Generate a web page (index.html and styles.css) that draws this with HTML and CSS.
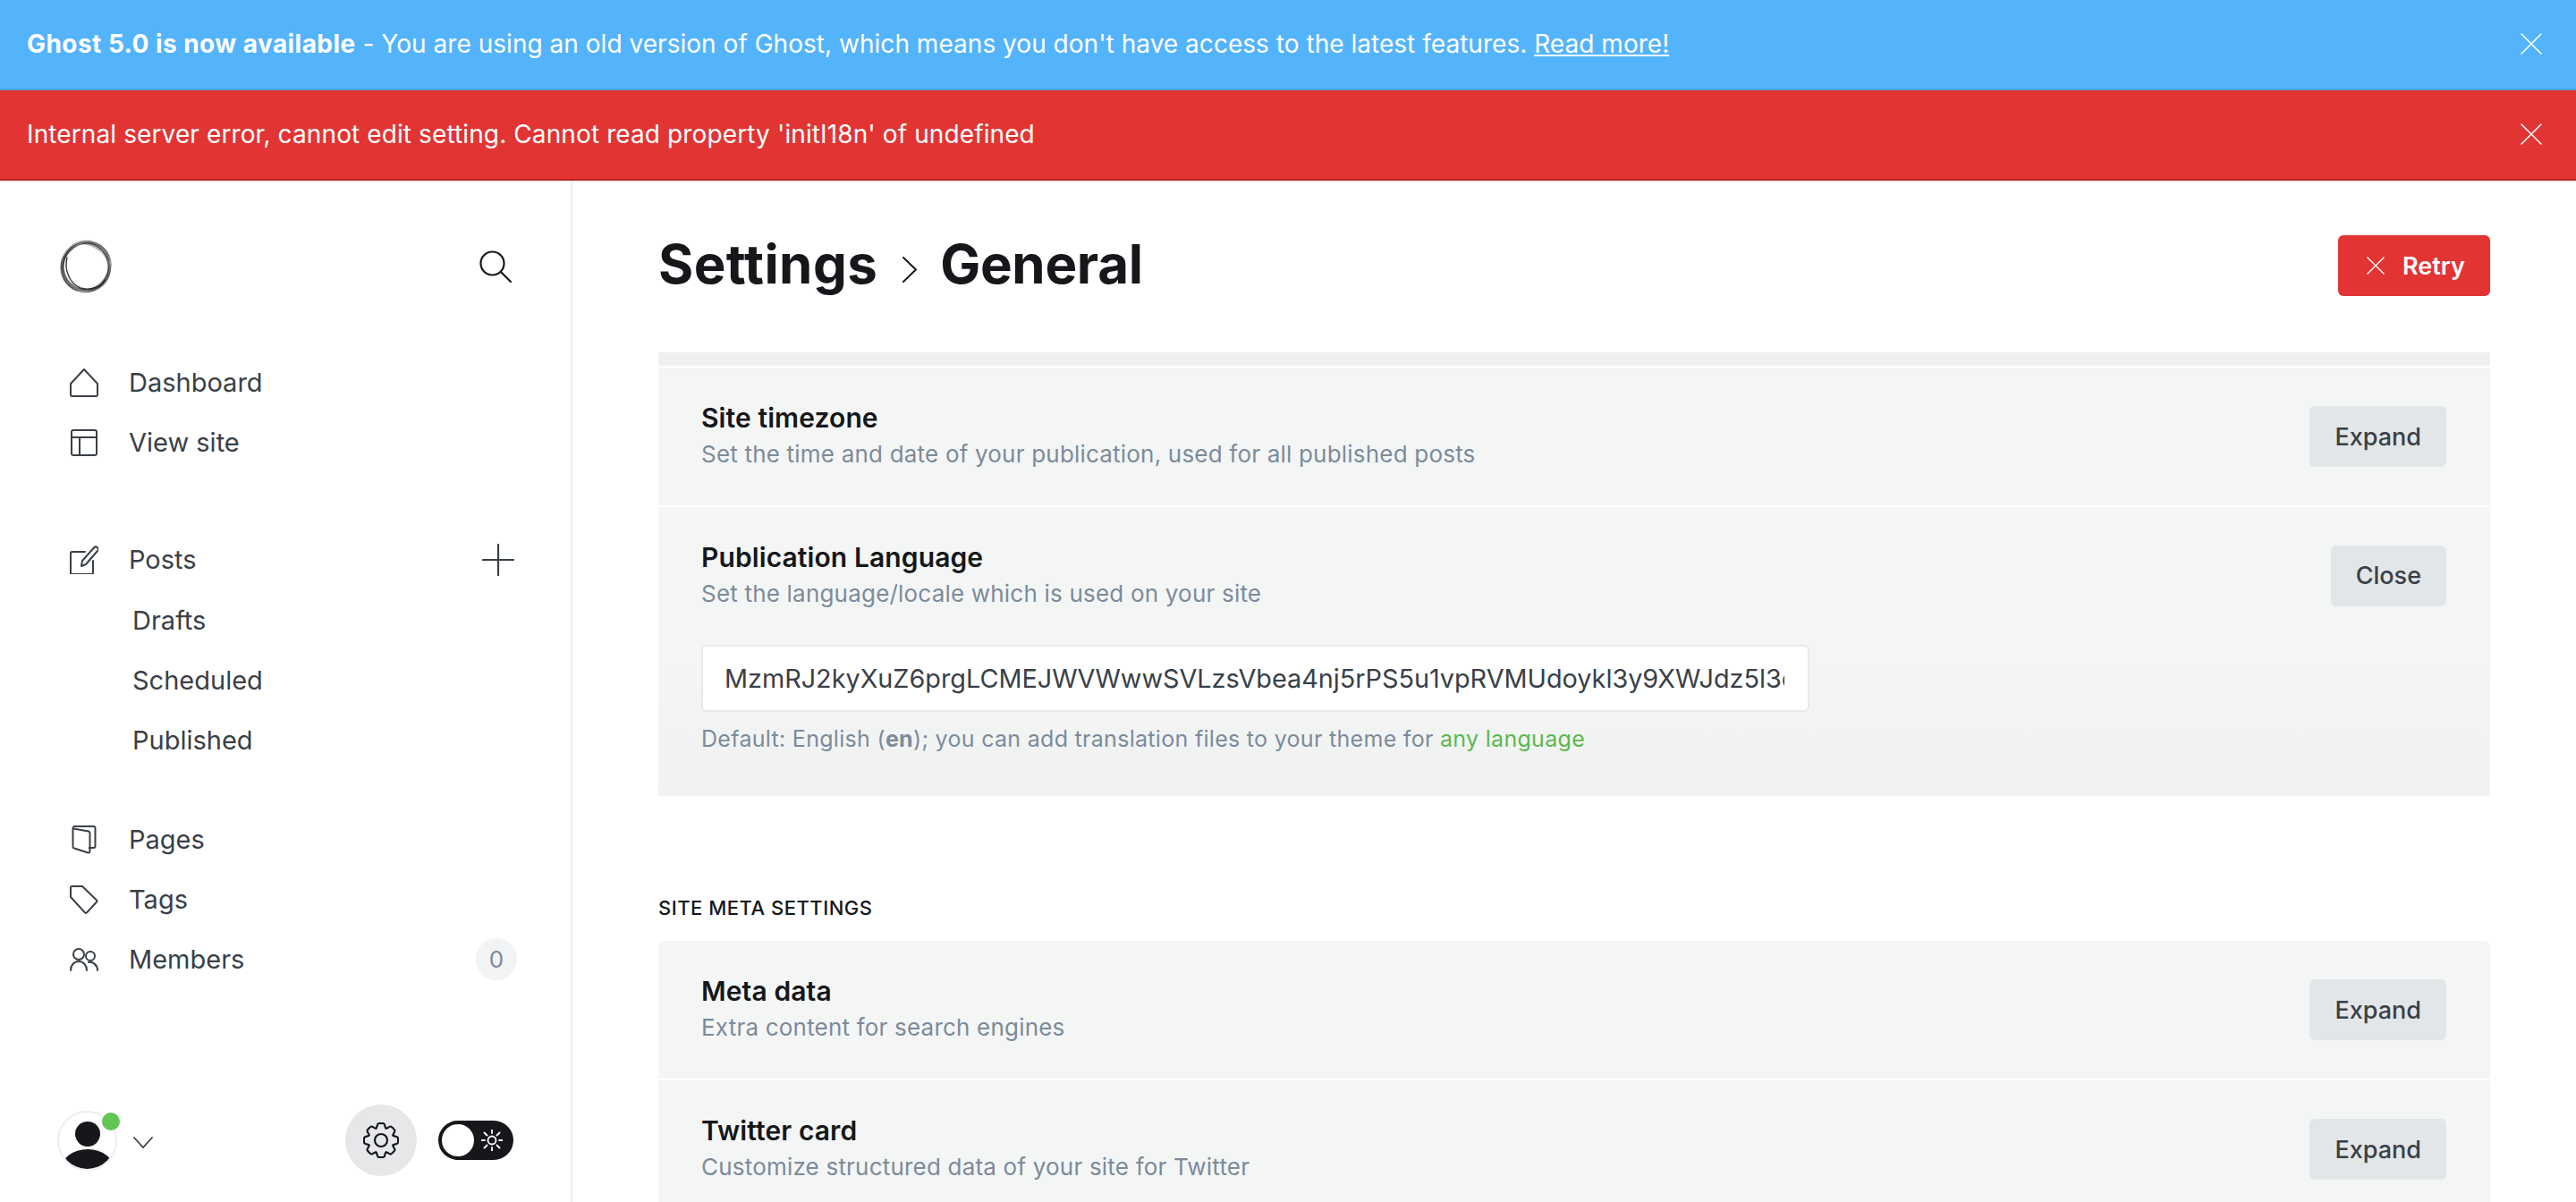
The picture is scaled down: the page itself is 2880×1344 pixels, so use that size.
FILE: index.html
```html
<!DOCTYPE html>
<html lang="en">
<head>
    <meta charset="UTF-8">
    <title>Settings - General</title>
    <link rel="stylesheet" href="styles.css">
</head>
<body>
<div class="alert alert-blue">
    <p><b>Ghost 5.0 is now available</b> - You are using an old version of Ghost, which means you don't have access to the latest features. <a href="#">Read more!</a></p>
    <svg class="alert-close" viewBox="0 0 24 24"><path d="M1 1l22 22M23 1L1 23"/></svg>
</div>
<div class="alert alert-red">
    <p>Internal server error, cannot edit setting. Cannot read property 'initI18n' of undefined</p>
    <svg class="alert-close" viewBox="0 0 24 24"><path d="M1 1l22 22M23 1L1 23"/></svg>
</div>

<div class="app">
    <aside class="sidebar">
        <div class="side-top">
            <svg class="logo" viewBox="0 0 60 60">
                <path d="M25 5C32-1 47 3 55 17c2 5 1 7 0 9C50 14 38 6 25 5z" fill="#bdbdbd" stroke="none"/>
                <path d="M56 26c5 12-3 28-18 32-5 1-8 1-11 0 16 1 30-15 29-32z" fill="#a0a0a0" stroke="none"/>
                <path d="M24 5C10 8 1 20 2 32c1 12 8 22 20 26C10 50 4 40 5 30 6 19 14 9 24 5z" fill="#9a9a9a" stroke="none"/>
                <ellipse cx="30" cy="30" rx="29" ry="24.500" transform="rotate(-45 30 30)"/>
                <ellipse cx="30" cy="30" rx="29" ry="25" transform="rotate(-70 30 30)"/>
                <ellipse cx="30" cy="30" rx="28.500" ry="25" transform="rotate(-100 30 30)"/>
                <ellipse cx="30" cy="30" rx="28.500" ry="25.500" transform="rotate(-20 30 30)"/>
                <ellipse cx="30" cy="30" rx="28" ry="25.500" transform="rotate(30 30 30)"/>
                <ellipse cx="30" cy="30" rx="27" ry="25" transform="rotate(70 30 30)"/>
                <path class="logo-edge" d="M9 20C6 32 10 48 24 54c10 3 22 0 27-9"/>
            </svg>
            <svg class="search-icon" viewBox="0 0 36 36"><circle cx="14.500" cy="14.500" r="13"/><path d="M24 24l11 11"/></svg>
        </div>

        <ul class="nav">
            <li><svg class="nav-icon" viewBox="0 0 32 32"><path d="M1 17L16 1l15 16v12.500a1.500 1.500 0 0 1-1.500 1.500h-27A1.500 1.500 0 0 1 1 29.500z"/></svg>Dashboard</li>
            <li><svg class="nav-icon" viewBox="0 0 32 32"><rect x="2" y="2" width="28" height="28" rx="2"/><path d="M2 10h28M11 10v20"/></svg>View site</li>
        </ul>

        <ul class="nav nav-posts">
            <li><svg class="nav-icon" viewBox="0 0 32 32"><path d="M17 7H2.500A1.500 1.500 0 0 0 1 8.500v22A1.500 1.500 0 0 0 2.500 32h22a1.500 1.500 0 0 0 1.500-1.500V17"/><path d="M13 23l1-6L27 2.500a2.500 2.500 0 0 1 4 3.500L18 21z"/></svg>Posts
                <svg class="plus" viewBox="0 0 36 36"><path d="M18 1v34M1 18h34"/></svg></li>
            <li class="sub">Drafts</li>
            <li class="sub">Scheduled</li>
            <li class="sub">Published</li>
        </ul>

        <ul class="nav">
            <li><svg class="nav-icon" viewBox="0 0 32 32"><path d="M4 3.500l17 3a2 2 0 0 1 1.500 2V29a1.500 1.500 0 0 1-2 1.500L5 25.500a2 2 0 0 1-1.500-2V3a2 2 0 0 1 2-2h21a2 2 0 0 1 2 2v20a2 2 0 0 1-2 2h-5"/></svg>Pages</li>
            <li><svg class="nav-icon" viewBox="0 0 32 32"><path d="M2.500 1H14l16 15.500a1.500 1.500 0 0 1 0 2L19 30.500a1.500 1.500 0 0 1-2 0L1 13V2.500A1.500 1.500 0 0 1 2.500 1z"/></svg>Tags</li>
            <li><svg class="nav-icon" viewBox="0 0 32 32"><circle cx="10" cy="10" r="6"/><path d="M1 28c0-6 4-10 9-10s9 4 9 10"/><circle cx="23" cy="12" r="5"/><path d="M21 19c5-1 10 3 10 9"/></svg>Members<span class="badge">0</span></li>
        </ul>

        <div class="side-foot">
            <div class="avatar">
                <svg viewBox="0 0 63 63"><circle cx="32" cy="24" r="14" fill="#15171a"/><ellipse cx="32" cy="64" rx="30" ry="23" fill="#15171a"/></svg>
                <span class="dot"></span>
            </div>
            <svg class="chevron" viewBox="0 0 22 13"><path d="M1 1l10 11L21 1"/></svg>
            <div class="gear-wrap">
                <svg class="gear" viewBox="0 0 40 40">
                    <defs><path id="tooth" d="M14.450 6.600C15.850 6 15.400 1.600 17.030 1.230Q20 .500 22.970 1.230C24.600 1.600 24.150 6 25.550 6.600"/></defs>
                    <circle cx="20" cy="20" r="7"/>
                    <use href="#tooth"/>
                    <use href="#tooth" transform="rotate(45 20 20)"/>
                    <use href="#tooth" transform="rotate(90 20 20)"/>
                    <use href="#tooth" transform="rotate(135 20 20)"/>
                    <use href="#tooth" transform="rotate(180 20 20)"/>
                    <use href="#tooth" transform="rotate(225 20 20)"/>
                    <use href="#tooth" transform="rotate(270 20 20)"/>
                    <use href="#tooth" transform="rotate(315 20 20)"/>
                </svg>
            </div>
            <div class="toggle">
                <span class="knob"></span>
                <svg class="sun" viewBox="0 0 24 24"><circle cx="12" cy="12" r="4.500"/><path d="M12 0v4M12 20v4M0 12h4M20 12h4M3.500 3.500l3 3M17.500 17.500l3 3M3.500 20.500l3-3M17.500 6.500l3-3"/></svg>
            </div>
        </div>
    </aside>

    <main class="main">
        <header class="head">
            <h1><span class="h1-root">Settings</span><svg class="crumb" viewBox="0 0 16 29"><path d="M1 1l14 13.500L1 28"/></svg>General</h1>
            <button class="retry"><svg viewBox="0 0 20 20"><path d="M.5.500l19 19M19.500.500l-19 19"/></svg>Retry</button>
        </header>

        <div class="strip"></div>
        <section class="row">
            <div>
                <h4>Site timezone</h4>
                <p>Set the time and date of your publication, used for all published posts</p>
            </div>
            <button class="btn">Expand</button>
        </section>
        <section class="row row-open">
            <div class="row-top">
                <div>
                    <h4>Publication Language</h4>
                    <p>Set the language/locale which is used on your site</p>
                </div>
                <button class="btn">Close</button>
            </div>
            <input class="text-input" type="text" value="MzmRJ2kyXuZ6prgLCMEJWVWwwSVLzsVbea4nj5rPS5u1vpRVMUdoykl3y9XWJdz5l3c7a2Qm">
            <p class="help">Default: English (<b>en</b>); you can add translation files to your theme for <a href="#">any language</a></p>
        </section>

        <h3 class="section-title">Site meta settings</h3>
        <section class="row row-first">
            <div>
                <h4>Meta data</h4>
                <p>Extra content for search engines</p>
            </div>
            <button class="btn">Expand</button>
        </section>
        <section class="row">
            <div>
                <h4>Twitter card</h4>
                <p>Customize structured data of your site for Twitter</p>
            </div>
            <button class="btn">Expand</button>
        </section>
    </main>
</div>
</body>
</html>
```

FILE: styles.css
```css
*{
    margin: 0;
    padding: 0;
    box-sizing: border-box;
}
html,body{
    height: 100%;
    overflow: hidden;
}
body{
    display: flex;
    flex-direction: column;
    font-family: Inter, "Liberation Sans", sans-serif;
    color: #15171a;
    background: #ffffff;
}
ul{
    list-style: none;
}
a{
    color: inherit;
}
svg{
    fill: none;
    flex: none;
}

/* alerts */
.alert{
    display: flex;
    align-items: center;
    justify-content: space-between;
    flex: none;
    height: 101px;
    padding: 0 38px 1px 30px;
    color: #ffffff;
    font-size: 28px;
}
.alert b{
    letter-spacing: .45px;
}
.alert-blue{
    background: #54b4fb;
    border-bottom: 2px solid #4a9fdd;
    letter-spacing: .03px;
}
.alert-red{
    background: #e13433;
    border-bottom: 2px solid #b72524;
    letter-spacing: .11px;
}
.alert-close{
    width: 24px;
    height: 24px;
    stroke: #ffffff;
    stroke-width: 1.600;
    stroke-linecap: round;
}

.app{
    display: flex;
    flex: 1;
    min-height: 0;
}

/* sidebar */
.sidebar{
    display: flex;
    flex-direction: column;
    flex: none;
    width: 640px;
    padding: 66px 64px 29px 64px;
    border-right: 2px solid #e9ebec;
}
.side-top{
    display: flex;
    align-items: center;
    justify-content: space-between;
    padding-right: 2px;
    margin-bottom: 66px;
}
.logo{
    width: 60px;
    height: 60px;
    margin-left: 2px;
    stroke: #15171a;
    stroke-width: 1.200;
    stroke-opacity: .4;
}
.logo .logo-edge{
    stroke-width: 1.400;
    stroke-opacity: .85;
    stroke-linecap: round;
}
.search-icon{
    width: 36px;
    height: 36px;
    stroke: #15171a;
    stroke-width: 2.200;
    stroke-linecap: round;
}
.nav{
    margin-bottom: 64px;
}
.nav-posts{
    margin-bottom: 45px;
}
.nav li{
    display: flex;
    align-items: center;
    height: 67px;
    font-size: 29px;
    color: #394047;
}
.nav .sub{
    padding: 1px 0 0 84px;
}
.nav-icon{
    width: 32px;
    height: 32px;
    margin: 0 34px 0 14px;
    stroke: #394047;
    stroke-width: 2;
    stroke-linejoin: round;
    stroke-linecap: round;
}
.plus{
    width: 36px;
    height: 36px;
    margin-left: auto;
    margin-right: -1px;
    stroke: #394047;
    stroke-width: 2.200;
    stroke-linecap: round;
}
.badge{
    display: flex;
    align-items: center;
    justify-content: center;
    width: 46px;
    height: 47px;
    margin-left: auto;
    margin-right: -4px;
    border-radius: 50%;
    background: #f1f3f4;
    color: #7c8b9a;
    font-size: 26px;
}
.side-foot{
    display: flex;
    align-items: center;
    margin-top: auto;
}
.avatar{
    width: 67px;
    height: 67px;
    border: 2px solid #eceeef;
    border-radius: 50%;
    position: relative;
}
.avatar svg{
    display: block;
    width: 63px;
    height: 63px;
    border-radius: 50%;
}
.dot{
    position: absolute;
    width: 20px;
    height: 20px;
    border-radius: 50%;
    background: #62c554;
    top: 0;
    left: 48px;
}
.chevron{
    width: 22px;
    height: 13px;
    margin: 4px 0 0 18px;
    stroke: #394047;
    stroke-width: 1.800;
    stroke-linecap: round;
}
.gear-wrap{
    display: flex;
    align-items: center;
    justify-content: center;
    width: 80px;
    height: 80px;
    margin-left: 215px;
    border-radius: 50%;
    background: #e5e7e9;
}
.gear{
    width: 40px;
    height: 40px;
    stroke: #15171a;
    stroke-width: 2.200;
    stroke-linecap: round;
}
.toggle{
    display: flex;
    align-items: center;
    justify-content: space-between;
    width: 84px;
    height: 44px;
    margin-left: 24px;
    padding: 0 12px 0 4px;
    border-radius: 22px;
    background: #15171a;
}
.knob{
    width: 36px;
    height: 36px;
    border-radius: 50%;
    background: #ffffff;
}
.sun{
    width: 24px;
    height: 24px;
    stroke: #ffffff;
    stroke-width: 1.800;
    stroke-linecap: round;
}

/* main */
.main{
    flex: 1;
    min-width: 0;
    padding: 0 96px;
}
.head{
    display: flex;
    align-items: center;
    justify-content: space-between;
    height: 190px;
    margin-bottom: 2px;
}
h1{
    display: flex;
    align-items: center;
    margin-bottom: 4px;
    font-size: 60px;
    font-weight: 700;
    letter-spacing: -.3px;
}
.h1-root{
    letter-spacing: .4px;
}
.crumb{
    width: 16px;
    height: 29px;
    margin: 13px 26px 0 28px;
    stroke: #15171a;
    stroke-width: 2;
    stroke-linecap: round;
}
.retry{
    display: flex;
    align-items: center;
    gap: 20px;
    width: 170px;
    height: 68px;
    padding-left: 32px;
    border: 0;
    border-radius: 6px;
    background: #e13433;
    color: #ffffff;
    font-family: inherit;
    font-size: 27px;
    font-weight: 600;
}
.retry svg{
    width: 20px;
    height: 20px;
    stroke: #ffffff;
    stroke-width: 1.400;
}
.strip{
    height: 15px;
    margin-bottom: 2px;
    background: #eff1f0;
}
.row{
    display: flex;
    justify-content: space-between;
    align-items: flex-start;
    height: 153.500px;
    padding: 36px 49px 0 48px;
    margin-bottom: 2px;
    background: #f4f6f6;
}
.row-first{
    height: 154px;
    border-radius: 6px 6px 0 0;
}
.row h4{
    font-size: 30px;
    font-weight: 600;
    line-height: 40px;
    letter-spacing: .1px;
}
.row p{
    margin-top: 3px;
    font-size: 26px;
    line-height: 36px;
    color: #7c8b9a;
    letter-spacing: .2px;
}
.row-open{
    display: block;
    height: 323.500px;
    background: linear-gradient(#f4f6f6 55%, #f0f1f1);
}
.row-top{
    display: flex;
    justify-content: space-between;
    align-items: flex-start;
}
.btn{
    height: 68px;
    margin-top: 7px;
    padding: 0 28px;
    border: 0;
    border-radius: 6px;
    background: #e3e6e8;
    color: #394047;
    font-family: inherit;
    font-size: 27px;
    font-weight: 500;
}
.text-input{
    display: block;
    width: 1239px;
    height: 75px;
    margin-top: 39px;
    padding: 0 26px 0 24px;
    border: 2px solid #e8eaea;
    border-radius: 6px;
    background: #ffffff;
    color: #394047;
    font-family: inherit;
    font-size: 28.800px;
}
.row .help{
    margin-top: 12px;
    font-size: 25px;
    letter-spacing: .3px;
}
.help a{
    color: #5cb94f;
    text-decoration: none;
}
.section-title{
    margin: 110px 0 22px;
    font-size: 22px;
    font-weight: 500;
    line-height: 30px;
    letter-spacing: .5px;
    text-transform: uppercase;
}
```
